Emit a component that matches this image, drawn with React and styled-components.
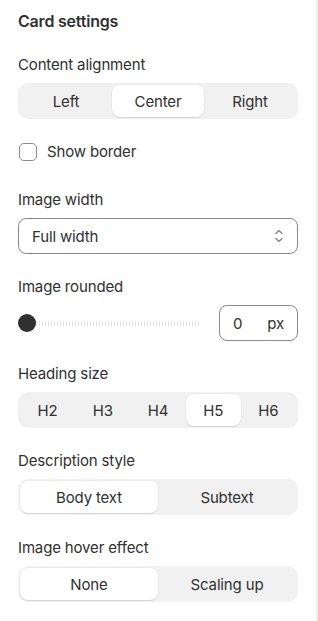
import React from "react";
import styled, { createGlobalStyle } from "styled-components";

const Global = createGlobalStyle`
  html, body { margin: 0; padding: 0; background: #ffffff; }
  body { font-family: Inter, "Noto Sans", "Liberation Sans", sans-serif; color: #303030; -webkit-font-smoothing: antialiased; }
  * { box-sizing: border-box; }
`;

const Panel = styled.div`
  width: 318px;
  min-height: 621px;
  border-right: 2px solid #f1f1f1;
  padding: 11px 18px 20px 18px;
  display: flex;
  flex-direction: column;
  gap: 23px;
`;

const Title = styled.h2`
  margin: 0 0 1px 0;
  font-size: 16px;
  line-height: 20px;
  font-weight: 600;
  letter-spacing: -0.2px;
  color: #303030;
`;

const Section = styled.div`
  display: flex;
  flex-direction: column;
  gap: 8px;
`;

const Label = styled.div`
  font-size: 15px;
  line-height: 20px;
  letter-spacing: -0.15px;
  font-weight: 400;
  color: #303030;
`;

const Segmented = styled.div`
  display: grid;
  grid-template-columns: repeat(${(p) => p.$count}, 1fr);
  padding: 2px;
  height: 36px;
  background: #f1f1f1;
  border-radius: 10px;
`;

const SegButton = styled.div`
  display: flex;
  align-items: center;
  justify-content: center;
  font-size: 15px;
  letter-spacing: -0.15px;
  color: #303030;
  border-radius: 8px;
  background: ${(p) => (p.$active ? "#ffffff" : "transparent")};
  box-shadow: ${(p) =>
    p.$active ? "0 1px 1px rgba(0,0,0,0.10), 0 0 0 0.5px rgba(0,0,0,0.04)" : "none"};
`;

const CheckRow = styled.label`
  display: flex;
  align-items: center;
  gap: 10px;
  font-size: 15px;
  letter-spacing: -0.15px;
  line-height: 20px;
  padding-left: 1px;
  margin-bottom: 5px;
`;

const CheckBox = styled.span`
  width: 18px;
  height: 18px;
  border: 1px solid #8a8a8a;
  border-radius: 5px;
  background: #fff;
`;

const Select = styled.div`
  height: 36px;
  border: 1px solid #8a8a8a;
  border-radius: 8px;
  display: flex;
  align-items: center;
  justify-content: space-between;
  padding: 0 8px 0 13px;
  font-size: 15px;
  letter-spacing: -0.15px;
  color: #303030;
`;

const SliderRow = styled.div`
  display: flex;
  align-items: center;
  gap: 18px;
`;

const Track = styled.div`
  position: relative;
  flex: 0 0 183px;
  height: 18px;
  display: flex;
  align-items: center;
  padding-left: 18px;
`;

const Dashes = styled.div`
  height: 5px;
  width: 100%;
  background: repeating-linear-gradient(90deg, #e4e4e4 0 1px, #ffffff 1px 3px);
`;

const Thumb = styled.span`
  position: absolute;
  left: 0;
  top: 0;
  width: 18px;
  height: 18px;
  border-radius: 50%;
  background: #303030;
`;

const NumberBox = styled.div`
  margin-left: auto;
  width: 79px;
  height: 36px;
  border: 1px solid #8a8a8a;
  border-radius: 8px;
  display: flex;
  align-items: center;
  justify-content: space-between;
  padding: 0 13px 0 13px;
  font-size: 15px;
  letter-spacing: -0.15px;
  color: #303030;
`;

const Suffix = styled.span`
  color: #303030;
`;

const SelectIcon = () => (
  <svg width="20" height="20" viewBox="0 0 20 20" fill="#8a8a8a">
    <path d="M10.884 4.323a1.25 1.25 0 0 0-1.768 0l-2.646 2.647a.75.75 0 0 0 1.06 1.06l2.47-2.47 2.47 2.47a.75.75 0 1 0 1.06-1.06l-2.646-2.647Z" />
    <path d="m13.53 13.03-2.646 2.647a1.25 1.25 0 0 1-1.768 0l-2.646-2.647a.75.75 0 0 1 1.06-1.06l2.47 2.47 2.470-2.47a.75.75 0 0 1 1.06 1.06Z" />
  </svg>
);

const SegGroup = ({ items, active }) => (
  <Segmented $count={items.length}>
    {items.map((it) => (
      <SegButton key={it} $active={it === active}>
        {it}
      </SegButton>
    ))}
  </Segmented>
);

export default function App() {
  return (
    <>
      <Global />
      <Panel>
        <Title>Card settings</Title>
        <Section>
          <Label>Content alignment</Label>
          <SegGroup items={["Left", "Center", "Right"]} active="Center" />
        </Section>
        <CheckRow>
          <CheckBox />
          Show border
        </CheckRow>
        <Section>
          <Label>Image width</Label>
          <Select>
            <span>Full width</span>
            <SelectIcon />
          </Select>
        </Section>
        <Section>
          <Label>Image rounded</Label>
          <SliderRow>
            <Track>
              <Dashes />
              <Thumb />
            </Track>
            <NumberBox>
              <span>0</span>
              <Suffix>px</Suffix>
            </NumberBox>
          </SliderRow>
        </Section>
        <Section>
          <Label>Heading size</Label>
          <SegGroup items={["H2", "H3", "H4", "H5", "H6"]} active="H5" />
        </Section>
        <Section>
          <Label>Description style</Label>
          <SegGroup items={["Body text", "Subtext"]} active="Body text" />
        </Section>
        <Section>
          <Label>Image hover effect</Label>
          <SegGroup items={["None", "Scaling up"]} active="None" />
        </Section>
      </Panel>
    </>
  );
}
